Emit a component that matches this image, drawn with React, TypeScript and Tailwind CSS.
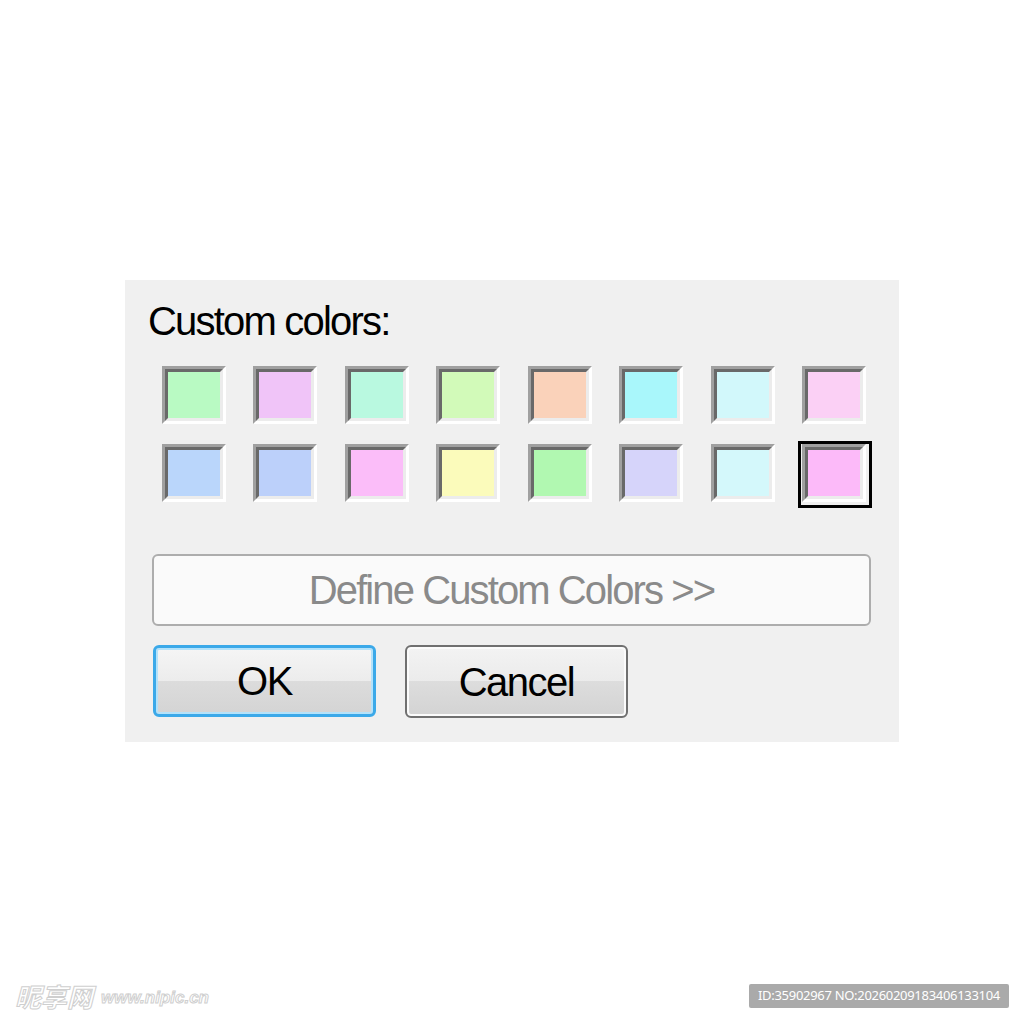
import React from "react";

const row1 = ["#b9fac3", "#f0c4f8", "#b9f9e0", "#d2fab9", "#fad2ba", "#a9f7fb", "#d2f8fb", "#fbd0f5"];
const row2 = ["#bad6fb", "#bcd0fa", "#fbbdf9", "#fbfbbb", "#b1f8b1", "#d6d4fa", "#d4f8fb", "#fcbaf9"];

function Swatch({ color, selected }: { color: string; selected?: boolean }) {
  return (
    <div className="relative w-[64px] h-[58px]">
      {selected && (
        <div className="absolute -left-[4px] -top-[3px] -right-[6px] -bottom-[6px] border-[3px] border-black" />
      )}
      <div className="relative w-full h-full flex border-[3px] border-t-[#a0a0a0] border-l-[#a0a0a0] border-r-white border-b-white">
        <div
          className="flex-1 border-[3px] border-t-[#696969] border-l-[#696969] border-r-[#ececec] border-b-[#ececec]"
          style={{ backgroundColor: color }}
        />
      </div>
    </div>
  );
}

export default function App() {
  const font = { fontFamily: '"Liberation Sans", Arial, sans-serif' };
  return (
    <div className="w-[1024px] h-[1024px] bg-white flex flex-col">
      <div
        className="mt-[280px] ml-[125px] w-[774px] h-[462px] bg-[#f0f0f0] pt-[21px] pl-[23px] pr-[27px] flex flex-col items-start"
        style={font}
      >
        <div className="text-[40px] leading-[40px] tracking-[-1.8px] text-black">Custom colors:</div>
        <div className="ml-[14px] mt-[25px] w-[704px] flex flex-col gap-[20px]">
          <div className="flex justify-between">
            {row1.map((c, i) => (
              <Swatch key={i} color={c} />
            ))}
          </div>
          <div className="flex justify-between">
            {row2.map((c, i) => (
              <Swatch key={i} color={c} selected={i === 7} />
            ))}
          </div>
        </div>
        <button className="ml-[4px] mt-[52px] w-[719px] h-[72px] rounded-[6px] border-2 border-[#adadad] bg-[#fafafa] flex items-center justify-center text-[40px] leading-[40px] tracking-[-1.9px] text-[#8a8a8a]">
          Define Custom Colors &gt;&gt;
        </button>
        <div className="ml-[5px] mt-[19px] flex gap-[29px]">
          <button className="w-[223px] h-[72px] rounded-[6px] border-[3px] border-[#3ba9e9] shadow-[inset_0_0_0_2px_#b4e2fa] bg-[linear-gradient(to_bottom,#f5f5f5_0%,#ececec_50%,#dcdcdc_50%,#d4d4d4_100%)] flex items-center justify-center text-[40px] leading-[40px] tracking-[-1.5px] text-black">
            OK
          </button>
          <button className="w-[223px] h-[73px] rounded-[6px] border-2 border-[#707070] shadow-[inset_0_0_0_2px_#fbfbfb] bg-[linear-gradient(to_bottom,#f3f3f3_0%,#ebebeb_50%,#dddddd_50%,#d3d3d3_100%)] flex items-center justify-center text-[40px] leading-[40px] tracking-[-1.5px] text-black">
            Cancel
          </button>
        </div>
      </div>
      <div className="mt-auto mb-[16px] px-[15px] h-[24px] flex items-center justify-between">
        <div className="flex items-end gap-[8px] italic font-bold text-transparent [-webkit-text-stroke:1px_#cfcfcf]">
          <span className="text-[26px] leading-[26px]" style={{ fontFamily: '"Noto Sans CJK SC", sans-serif' }}>
            昵享网
          </span>
          <span className="text-[17px] leading-[22px]" style={{ fontFamily: '"Liberation Sans", sans-serif' }}>
            www.nipic.cn
          </span>
        </div>
        <div
          className="w-[260px] h-[24px] bg-[#aaaaaa] rounded-[2px] flex items-center justify-center text-white text-[13px] tracking-[-0.3px] whitespace-nowrap overflow-hidden"
          style={{ fontFamily: '"Noto Sans", sans-serif' }}
        >
          ID:35902967 NO:20260209183406133104
        </div>
      </div>
    </div>
  );
}
